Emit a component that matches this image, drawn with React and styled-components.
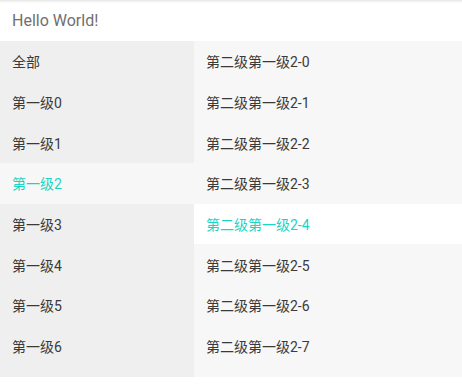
import React, { useState } from "react";
import styled, { createGlobalStyle } from "styled-components";

const GlobalStyle = createGlobalStyle`
  html, body {
    margin: 0;
    padding: 0;
    background: #ffffff;
  }
  body {
    font-family: Roboto, "Noto Sans CJK SC", sans-serif;
  }
`;

const Page = styled.div`
  width: 462px;
  height: 387px;
  display: flex;
  flex-direction: column;
  background: #ffffff;
`;

// 상단 헤더
const Header = styled.div`
  height: 41px;
  flex-shrink: 0;
  display: flex;
  align-items: center;
  padding-left: 12px;
  font-size: 16px;
  color: #6f6f6f;
  background: linear-gradient(#e6e6e6 0px, #ffffff 3px);
`;

const Body = styled.div`
  height: 336px;
  display: flex;
`;

const Column = styled.div`
  width: ${(p) => p.$width};
  height: 100%;
  overflow: hidden;
  background: ${(p) => p.$bg};
`;

const Item = styled.div`
  height: 40.67px;
  display: flex;
  align-items: center;
  padding-left: 12px;
  font-size: 14px;
  color: ${(p) => (p.$active ? "#1ad5c5" : "#3a3a3a")};
  background: ${(p) => (p.$active ? p.$activeBg : "transparent")};
  cursor: pointer;
`;

// 화면에 보이는 8개 항목만
const first = ["全部", ...Array.from({ length: 7 }, (_, i) => `第一级${i}`)];

const App = () => {
  const [sel, setSel] = useState(3);
  const [sub, setSub] = useState(4);
  const groupIdx = Math.max(sel - 1, 0);
  const second = Array.from({ length: 8 }, (_, i) => `第二级第一级${groupIdx}-${i}`);

  return (
    <>
      <GlobalStyle />
      <Page>
        <Header>Hello World!</Header>
        <Body>
          <Column $width="194px" $bg="#efefef">
            {first.map((t, i) => (
              <Item
                key={t}
                $active={i === sel}
                $activeBg="#f7f7f7"
                onClick={() => setSel(i)}
              >
                {t}
              </Item>
            ))}
          </Column>
          <Column $width="268px" $bg="#f7f7f7">
            {second.map((t, i) => (
              <Item
                key={t}
                $active={i === sub}
                $activeBg="#ffffff"
                onClick={() => setSub(i)}
              >
                {t}
              </Item>
            ))}
          </Column>
        </Body>
      </Page>
    </>
  );
};

export default App;
